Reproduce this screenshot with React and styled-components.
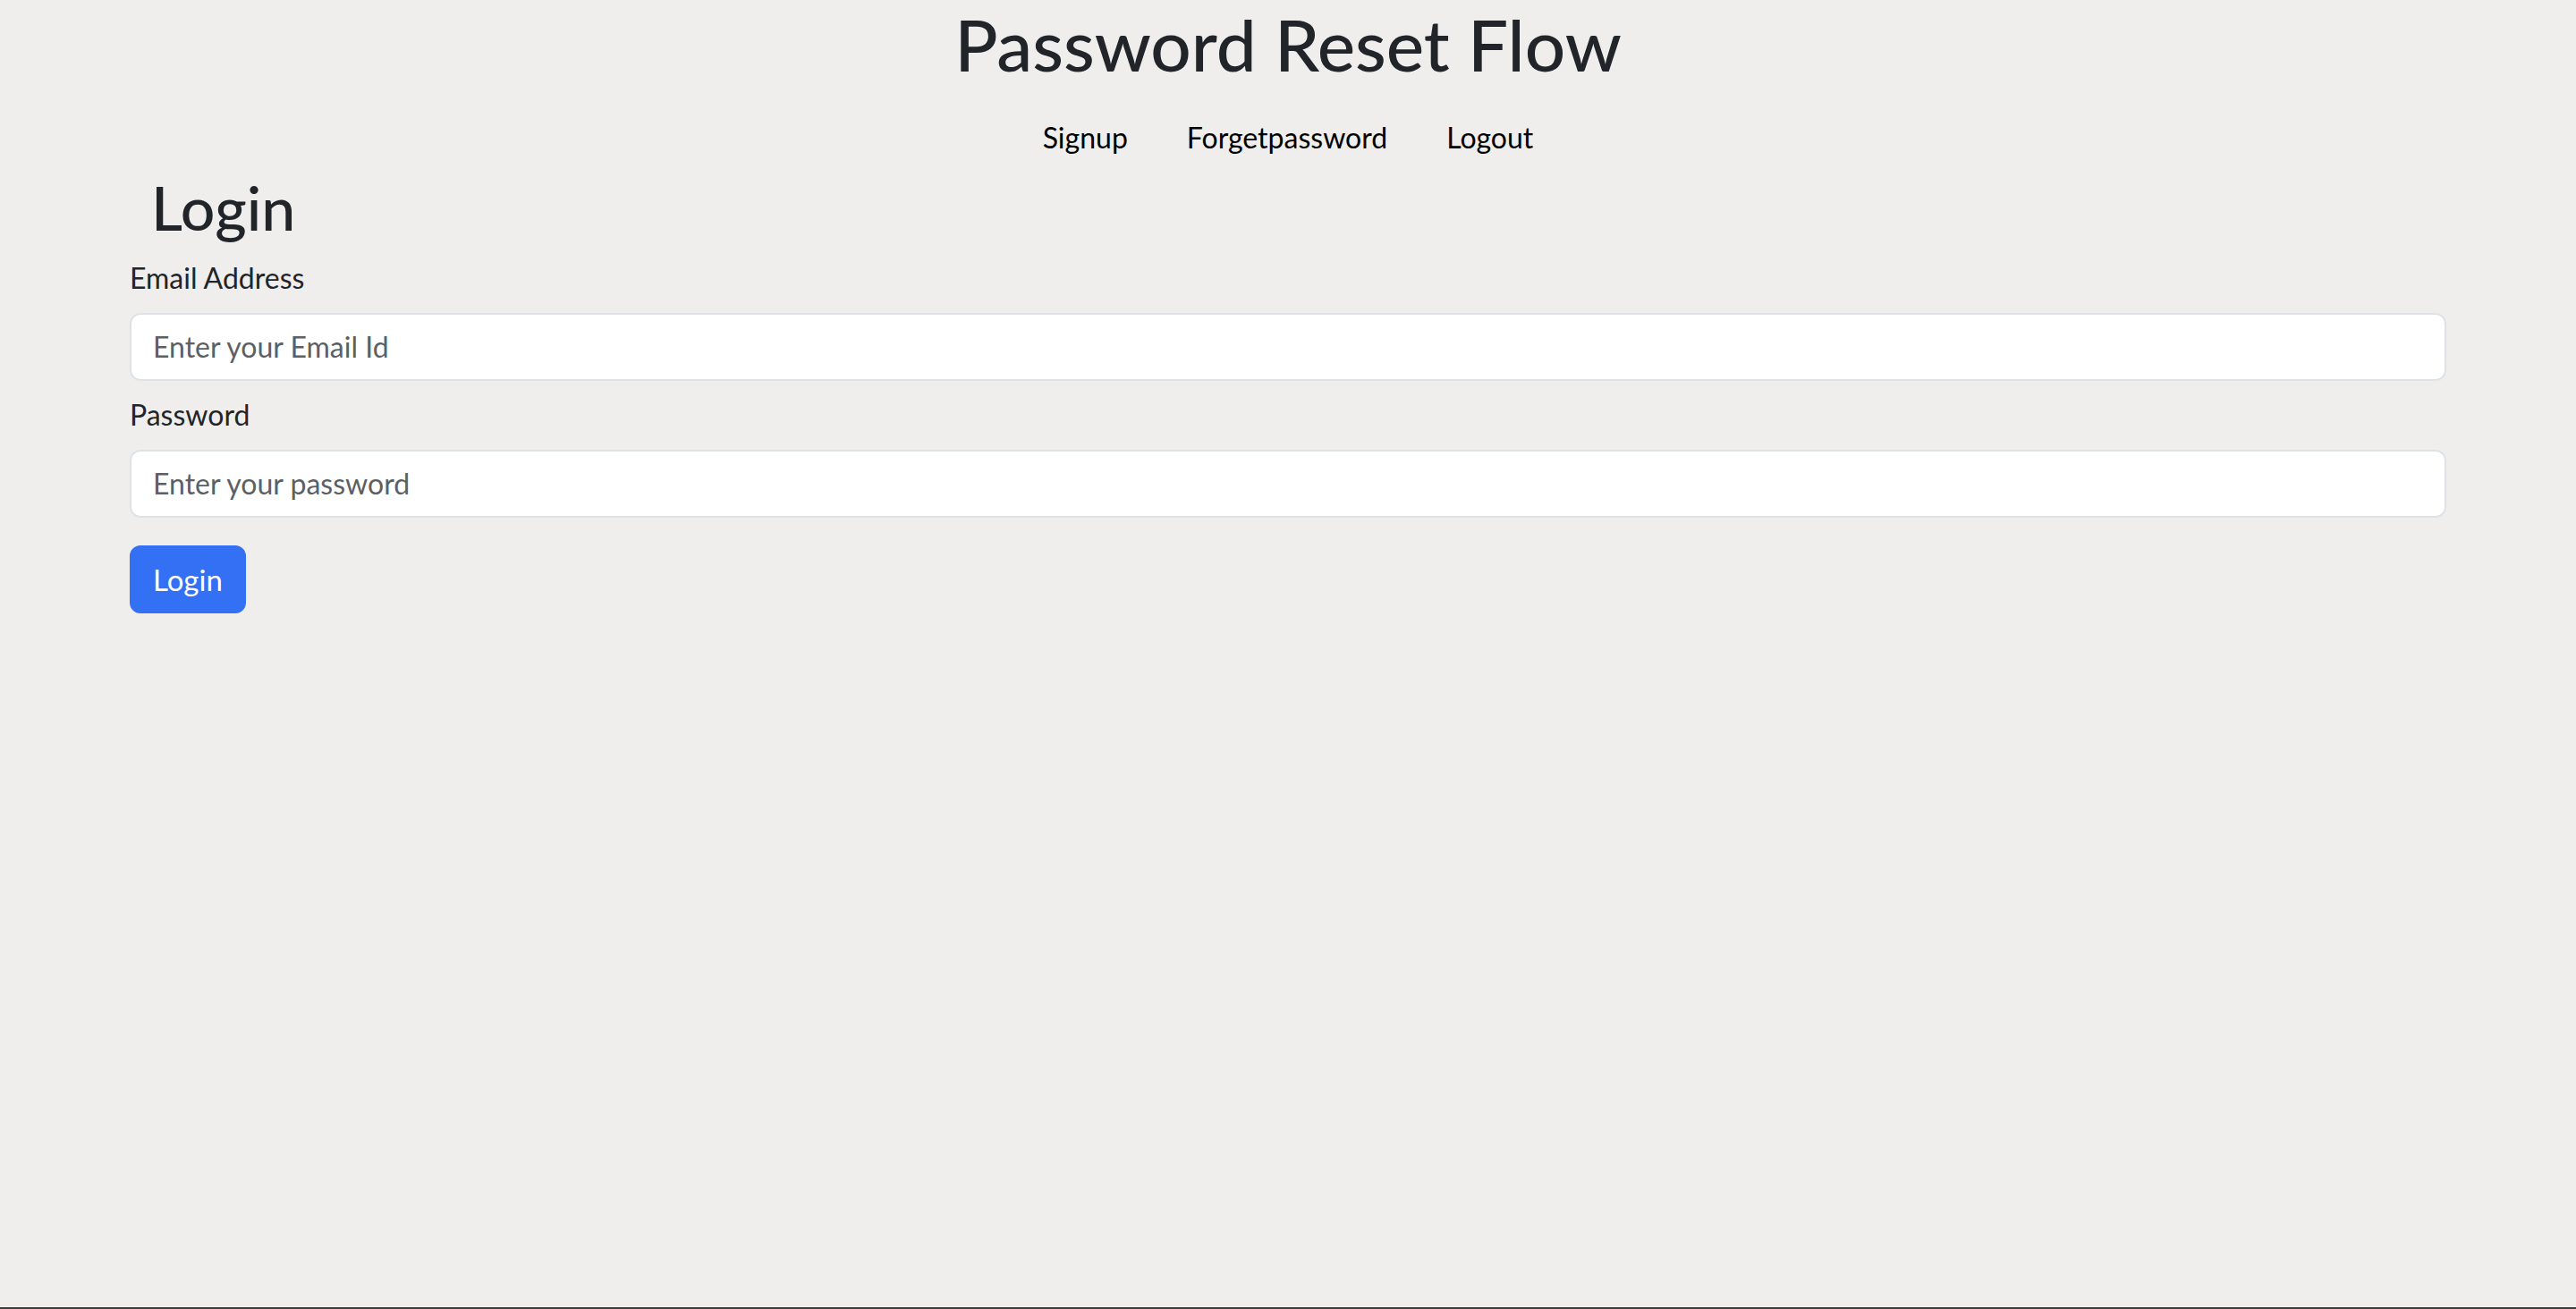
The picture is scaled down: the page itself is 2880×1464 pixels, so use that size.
import React, { useState } from 'react'
import styled, { createGlobalStyle } from 'styled-components'

const GlobalStyle = createGlobalStyle`
    html, body {
        margin: 0;
        padding: 0;
        background: #efeeec;
    }
    body {
        font-family: Lato, "Noto Sans", "Liberation Sans", sans-serif;
        color: #212529;
    }
    * {
        box-sizing: border-box;
    }
`

const Page = styled.div`
    min-height: 100vh;
    padding-top: 1px;
    border-bottom: 2px solid #3c3c3c;
`

const Title = styled.h1`
    margin: 0;
    font-size: 80px;
    font-weight: 500;
    line-height: 1.2;
    text-align: center;
`

const Nav = styled.nav`
    display: flex;
    justify-content: center;
    gap: 66px;
    margin-top: 33px;
`

const NavLink = styled.a`
    font-size: 32px;
    line-height: 1.5;
    color: #000;
    text-decoration: none;
    cursor: pointer;
`

const Container = styled.div`
    width: 2590px;
    margin: 13px auto 0;
`

const Heading = styled.h2`
    margin: 0 0 14px 24px;
    font-size: 68px;
    font-weight: 500;
    line-height: 1.2;
`

const Form = styled.form`
    display: flex;
    flex-direction: column;
`

const Field = styled.div`
    margin-bottom: ${props => props.last ? '31px' : '14px'};
`

const Label = styled.label`
    display: block;
    margin-bottom: 15px;
    font-size: 32px;
    line-height: 1.5;
`

const Input = styled.input`
    display: block;
    width: 100%;
    height: 76px;
    padding: 12px 24px;
    font-family: inherit;
    font-size: 32px;
    color: #212529;
    background: #fff;
    border: 2px solid #dee2e6;
    border-radius: 12px;
    outline: none;
    &::placeholder {
        color: #5c5f63;
    }
`

const Button = styled.button`
    align-self: flex-start;
    height: 76px;
    padding: 12px 24px;
    font-family: inherit;
    font-size: 33px;
    line-height: 1.5;
    color: #fff;
    background: #3370f4;
    border: 2px solid #3370f4;
    border-radius: 12px;
    cursor: pointer;
`

export const App = () => {
    const [email, setEmail] = useState('')
    const [password, setPassword] = useState('')

    const handleSubmit = (e) => {
        e.preventDefault()
    }

    return (
        <Page>
            <GlobalStyle />
            <Title>Password Reset Flow</Title>
            <Nav>
                <NavLink>Signup</NavLink>
                <NavLink>Forgetpassword</NavLink>
                <NavLink>Logout</NavLink>
            </Nav>
            <Container>
                <Heading>Login</Heading>
                <Form onSubmit={handleSubmit}>
                    <Field>
                        <Label>Email Address</Label>
                        <Input type="email" placeholder="Enter your Email Id" value={email} onChange={(e) => setEmail(e.target.value)} />
                    </Field>
                    <Field last>
                        <Label>Password</Label>
                        <Input type="password" placeholder="Enter your password" value={password} onChange={(e) => setPassword(e.target.value)} />
                    </Field>
                    <Button type="submit">Login</Button>
                </Form>
            </Container>
        </Page>
    )
}

export default App
